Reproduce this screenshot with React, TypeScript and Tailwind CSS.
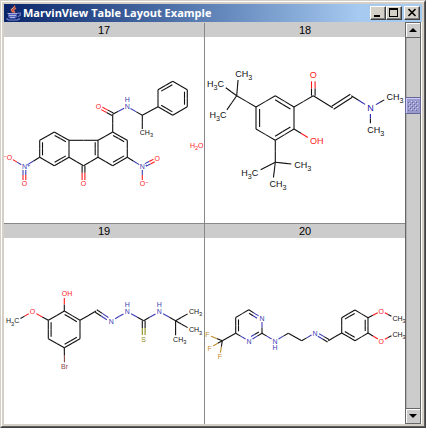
import React from "react";

const INK = "#101010";
const RED = "#ff1a1a";
const BLUE = "#3c3cb4";
const OLIVE = "#8c8c18";
const GOLD = "#c08a28";
const BROWN = "#8c4848";

/* Atom: x, y, label parts ("_" = subscript, "^" = superscript), colour, text anchor */
type Anchor = "start" | "middle" | "end";
type Atom = [number, number, string?, string?, Anchor?];
/* Bond: from, to, kind (1 single, "c" centred double, "l"/"r" double on one side) */
type Bond = [string, string, (1 | "c" | "l" | "r")?];

interface Molecule {
  id: number;
  name: string;
  origin: [number, number];
  size: number;
  gap: number;
  atoms: Record<string, Atom>;
  bonds: Bond[];
}

const molecules: Molecule[] = [
  {
    id: 17,
    name: "Dinitrofluorenone amide hydrate",
    origin: [4, 37],
    size: 7,
    gap: 2.2,
    atoms: {
      a1: [39.7, 140.3], a2: [54.3, 132], a3: [69, 140.3], a4: [69, 157.3], a5: [54.3, 165.7], a6: [39.7, 157.3],
      b1: [98, 140.3], b2: [98, 157.3], b3: [83.5, 165.7], o1: [83.5, 183.5, "O", RED],
      c1: [112.7, 132], c2: [127.3, 140.3], c3: [127.3, 157.3], c4: [112.7, 165.7],
      d1: [112.7, 114.3], o2: [98.6, 106.7, "O", RED], n1: [127.3, 106.7, "N", BLUE], h1: [127.3, 99.7, "H", BLUE],
      d2: [142.3, 115.3], m1: [142.3, 132.7, "CH_3", INK, "start"],
      p1: [158, 106.7], p2: [158, 89.7], p3: [172.7, 81.3], p4: [187.3, 89.7], p5: [187.3, 106.7], p6: [172.7, 115.3],
      n2: [142.3, 166.5, "N^+", BLUE, "start"], o3: [157.3, 158.9, "O", RED], o4: [142.3, 183.7, "O^-", RED, "start"],
      n3: [24.4, 166.5, "N^+", BLUE, "start"], o5: [9.7, 157.8, "^-O", RED, "end"], o6: [24.4, 183.5, "O", RED],
      w: [201, 145.7, "H_2O", RED, "end"],
    },
    bonds: [
      ["a1", "a2"], ["a2", "a3", "r"], ["a3", "a4"], ["a4", "a5", "r"], ["a5", "a6"], ["a6", "a1", "r"],
      ["a3", "b1"], ["b1", "b2", "r"], ["b2", "b3"], ["b3", "a4"], ["b3", "o1", "c"],
      ["b1", "c1"], ["c1", "c2", "r"], ["c2", "c3"], ["c3", "c4", "r"], ["c4", "b2"],
      ["c1", "d1"], ["d1", "o2", "c"], ["d1", "n1"], ["n1", "d2"], ["d2", "m1"], ["d2", "p1"],
      ["p1", "p2"], ["p2", "p3", "r"], ["p3", "p4"], ["p4", "p5", "r"], ["p5", "p6"], ["p6", "p1", "r"],
      ["c3", "n2"], ["n2", "o3", "c"], ["n2", "o4"], ["a6", "n3"], ["n3", "o5"], ["n3", "o6", "c"],
    ],
  },
  {
    id: 18,
    name: "Di-tert-butyl hydroxyphenyl enaminone",
    origin: [205, 37],
    size: 9,
    gap: 4.5,
    atoms: {
      a1: [256, 107], a2: [275.3, 95.7], a3: [294, 107], a4: [294, 129], a5: [275.3, 140.3], a6: [256, 129],
      t1: [236.7, 95.7], m1: [238.6, 73.8, "CH_3", INK, "start"], m2: [220.7, 84, "H_3C", INK, "end"], m3: [223.3, 115, "H_3C", INK, "end"],
      t2: [275.3, 162.3], m4: [297.6, 164.6, "CH_3", INK, "start"], m5: [255, 172.7, "H_3C", INK, "end"], m6: [272.7, 183.7, "CH_3", INK, "start"],
      oh: [313.3, 140.7, "OH", RED, "start"],
      d1: [313.3, 95.7], o1: [313.3, 75, "O", RED], d2: [332.7, 107.7], d3: [351.3, 95.7],
      n1: [370.4, 107.7, "N", "#2020a8"], m7: [389.8, 96.8, "CH_3", INK, "start"], m8: [370.4, 129.5, "CH_3", INK, "start"],
    },
    bonds: [
      ["a1", "a2"], ["a2", "a3", "r"], ["a3", "a4"], ["a4", "a5", "r"], ["a5", "a6"], ["a6", "a1", "r"],
      ["a1", "t1"], ["t1", "m1"], ["t1", "m2"], ["t1", "m3"],
      ["a5", "t2"], ["t2", "m4"], ["t2", "m5"], ["t2", "m6"],
      ["a4", "oh"], ["a3", "d1"], ["d1", "o1", "c"], ["d1", "d2"], ["d2", "d3", "c"], ["d3", "n1"], ["n1", "m7"], ["n1", "m8"],
    ],
  },
  {
    id: 19,
    name: "Bromo methoxy salicylaldehyde thiosemicarbazone",
    origin: [4, 238],
    size: 7,
    gap: 3,
    atoms: {
      a1: [48.3, 320.3], a2: [64.3, 311], a3: [80, 320.3], a4: [80, 338.7], a5: [64.3, 347.7], a6: [48.3, 338.7],
      oh: [64.3, 293.7, "OH", RED, "start"], o1: [32.5, 311.5, "O", RED], m1: [16.7, 320.8, "H_3C", INK, "end"],
      br: [64.5, 366.7, "Br", BROWN], d1: [96, 311], n1: [111.3, 321, "N", BLUE],
      n2: [127.3, 311.7, "N", BLUE], h2: [127.3, 304.4, "H", BLUE], d2: [143.7, 320.7], s: [143.7, 339.5, "S", OLIVE],
      n3: [159.3, 311.7, "N", BLUE], h3: [159.3, 304.4, "H", BLUE], t: [175.6, 320.7],
      m2: [191.5, 311.7, "CH_3", INK, "start"], m3: [191.5, 329.8, "CH_3", INK, "start"], m4: [175.6, 339.7, "CH_3", INK, "start"],
    },
    bonds: [
      ["a1", "a2"], ["a2", "a3", "r"], ["a3", "a4"], ["a4", "a5", "r"], ["a5", "a6"], ["a6", "a1", "r"],
      ["a2", "oh"], ["a1", "o1"], ["o1", "m1"], ["a5", "br"], ["a3", "d1"], ["d1", "n1", "c"], ["n1", "n2"],
      ["n2", "d2"], ["d2", "s", "c"], ["d2", "n3"], ["n3", "t"], ["t", "m2"], ["t", "m3"], ["t", "m4"],
    ],
  },
  {
    id: 20,
    name: "Trifluoromethyl pyrimidine dimethoxybenzylidene diamine",
    origin: [205, 238],
    size: 7,
    gap: 2.6,
    atoms: {
      a1: [235.7, 333.3], a2: [235.7, 317.5], a3: [248.8, 309.8], a4: [262, 318, "N", BLUE], a5: [262, 333.3], a6: [249, 341, "N", BLUE],
      t: [222.3, 340.7], f1: [207.3, 334.8, "F", GOLD], f2: [209.7, 348, "F", GOLD], f3: [219.8, 356.7, "F", GOLD],
      n1: [275, 341, "N", BLUE], h1: [275, 347.6, "H", BLUE], d1: [288.3, 333.3], d2: [301.7, 340.7], n2: [315, 333, "N", BLUE], d3: [328.3, 340.7],
      b1: [341.7, 333], b2: [341.7, 317.7], b3: [355, 310], b4: [368, 317.7], b5: [368, 333], b6: [355, 340.7],
      o1: [381.3, 311, "O", RED], m1: [395, 318.2, "CH_3", INK, "start"], o2: [381.3, 341, "O", RED], m2: [395, 334, "CH_3", INK, "start"],
    },
    bonds: [
      ["a1", "a2", "r"], ["a2", "a3"], ["a3", "a4", "r"], ["a4", "a5"], ["a5", "a6", "r"], ["a6", "a1"],
      ["a1", "t"], ["t", "f1"], ["t", "f2"], ["t", "f3"], ["a5", "n1"], ["n1", "d1"], ["d1", "d2"], ["d2", "n2"], ["n2", "d3", "c"], ["d3", "b1"],
      ["b1", "b2"], ["b2", "b3", "r"], ["b3", "b4"], ["b4", "b5", "r"], ["b5", "b6"], ["b6", "b1", "r"],
      ["b4", "o1"], ["o1", "m1"], ["b5", "o2"], ["o2", "m2"],
    ],
  },
];

function BondLines({ a, b, kind, gap, size }: { a: Atom; b: Atom; kind: 1 | "c" | "l" | "r"; gap: number; size: number }) {
  const dx = b[0] - a[0];
  const dy = b[1] - a[1];
  const len = Math.hypot(dx, dy);
  const ux = dx / len;
  const uy = dy / len;
  const trim = (atom: Atom) => (atom[2] ? gap + size * 0.2 : 0);
  const space = size > 8 ? 3.6 : 2.8;
  const line = (shift: number, inset: number) => {
    const s = Math.max(trim(a), inset);
    const e = len - Math.max(trim(b), inset);
    const m = (s + e) / 2;
    const at = (t: number): [number, number] => [a[0] + ux * t - uy * shift, a[1] + uy * t + ux * shift];
    const [p, q, r] = [at(s), at(m), at(e)];
    return (
      <g key={shift}>
        <line x1={p[0]} y1={p[1]} x2={q[0]} y2={q[1]} stroke={a[3] ?? INK} />
        <line x1={q[0]} y1={q[1]} x2={r[0]} y2={r[1]} stroke={b[3] ?? INK} />
      </g>
    );
  };
  if (kind === 1) return line(0, 0);
  if (kind === "c") return <>{[line(-space / 2, 0), line(space / 2, 0)]}</>;
  return <>{[line(0, 0), line(kind === "r" ? space : -space, 2)]}</>;
}

function AtomLabel({ atom, size }: { atom: Atom; size: number }) {
  const [x, y, label, color, anchor = "middle"] = atom;
  if (!label) return null;
  const half = size * 0.36;
  const tx = anchor === "start" ? x - half : anchor === "end" ? x + half : x;
  const parts = label.match(/[_^].|[^_^]+?(?=[_^]|$)/g) ?? [];
  let level = 0;
  return (
    <text x={tx} y={y + size * 0.36} fill={color} fontSize={size} textAnchor={anchor}>
      {parts.map((part, i) => {
        const next = part[0] === "_" ? size * 0.32 : part[0] === "^" ? -size * 0.35 : 0;
        const dy = next - level;
        level = next;
        return (
          <tspan key={i} dy={dy} fontSize={next ? size * 0.8 : size}>
            {part.replace(/[_^]/, "").replace("-", "−")}
          </tspan>
        );
      })}
    </text>
  );
}

function MoleculeCell({ molecule }: { molecule: Molecule }) {
  const { id, name, origin, size, gap, atoms, bonds } = molecule;
  return (
    <section className="flex min-w-0 flex-col bg-white">
      <h2 className="h-[14px] bg-[#cccccc] text-center text-[11px] leading-[15px] text-black">{id}</h2>
      <svg viewBox={`${origin[0]} ${origin[1]} 200 186`} role="img" aria-label={name} className="block w-full" strokeWidth={1.1}>
        {bonds.map(([from, to, kind = 1]) => (
          <BondLines key={from + to} a={atoms[from]} b={atoms[to]} kind={kind} gap={gap} size={size} />
        ))}
        {Object.entries(atoms).map(([key, atom]) => (
          <AtomLabel key={key} atom={atom} size={size} />
        ))}
      </svg>
    </section>
  );
}

function JavaIcon() {
  return (
    <svg viewBox="0 0 16 16" className="h-4 w-4 shrink-0" fill="none" aria-hidden="true">
      <path d="M8.5 0.5v1.5L5.5 4.5v1l2 2M10 3L7.5 5v1L9 7.5" stroke="#f07048" strokeWidth="1.4" />
      <path d="M7.5 2.5l-2 2" stroke="#f8c8b0" strokeWidth="0.8" />
      <path d="M2 8.5h9v3.2l-1.5 1.8h-6L2 11.7z" fill="#5060b8" />
      <path d="M1.5 8.5h10M3 10.5h7M4 12.5h5" stroke="#c8ccf0" strokeWidth="0.8" />
      <path d="M11.5 8.2h2.8v2l-2.5 1.5" stroke="#7078c8" strokeWidth="1.2" />
      <path d="M0.5 13.6l2 1.4h8.5l3-1.4" stroke="#7c88d8" strokeWidth="1.2" />
    </svg>
  );
}

const captionButton =
  "flex h-[14px] w-4 items-center justify-center border border-t-white border-l-white border-r-[#404040] border-b-[#404040] bg-[#d4d0c8] shadow-[inset_-1px_-1px_0_#808080]";
const arrowButton =
  "flex h-4 w-full shrink-0 items-center justify-center border border-[#666666] bg-[#cccccc] shadow-[inset_1px_1px_0_#ffffff]";

function TitleBar() {
  return (
    <header className="flex h-[18px] items-center bg-linear-to-r from-[#0a246a] to-[#a6caf0] to-85% pr-[2px] pl-[2px]">
      <JavaIcon />
      <h1 className="ml-px min-w-0 flex-1 truncate font-['Open_Sans','Noto_Sans',sans-serif] text-[11px] leading-[18px] font-bold text-white">
        MarvinView Table Layout Example
      </h1>
      <button type="button" aria-label="Minimize" className={captionButton}>
        <svg viewBox="0 0 14 12" className="h-3 w-[14px]"><path d="M3 8h6v2H3z" /></svg>
      </button>
      <button type="button" aria-label="Maximize" className={captionButton}>
        <svg viewBox="0 0 14 12" className="h-3 w-[14px]"><path fillRule="evenodd" d="M2 1h9v9H2zM3 3v6h7V3z" /></svg>
      </button>
      <button type="button" aria-label="Close" className={`${captionButton} ml-[2px]`}>
        <svg viewBox="0 0 14 12" className="h-3 w-[14px]" stroke="#000" strokeWidth="1.6"><path d="M3.5 2l7 7M10.5 2l-7 7" /></svg>
      </button>
    </header>
  );
}

function ScrollBar() {
  return (
    <div className="mr-px flex w-4 shrink-0 flex-col">
      <button type="button" aria-label="Scroll up" className={arrowButton}>
        <svg viewBox="0 0 8 4" className="h-1 w-2"><path d="M0 4h8L4 0z" /></svg>
      </button>
      <div
        role="scrollbar"
        aria-label="Molecules"
        aria-controls="molecule-table"
        aria-orientation="vertical"
        aria-valuenow={16}
        className="flex flex-1 flex-col border-x border-[#666666] bg-[#cccccc] shadow-[inset_1px_0_0_#b0b0b0]"
      >
        <div className="grow-[16]" />
        <div className="-mx-px h-[17px] border border-[#666699] bg-[#9999cc] p-[2px] shadow-[inset_1px_1px_0_#ccccff]">
          <svg viewBox="0 0 10 11" className="block h-[11px] w-[10px]" aria-hidden="true">
            {[0, 1, 2, 3, 4].map((row) =>
              [0, 1, 2].map((col) => {
                const x = col * 4 + (row % 2) * 2 - 1;
                const y = row * 2 + 1;
                return (
                  <g key={`${row}-${col}`}>
                    <rect x={x} y={y} width="1" height="1" fill="#ccccff" />
                    <rect x={x + 1} y={y + 1} width="1" height="1" fill="#666699" />
                  </g>
                );
              }),
            )}
          </svg>
        </div>
        <div className="grow-[80]" />
      </div>
      <button type="button" aria-label="Scroll down" className={arrowButton}>
        <svg viewBox="0 0 8 4" className="h-1 w-2"><path d="M0 0h8L4 4z" /></svg>
      </button>
    </div>
  );
}

export default function App() {
  return (
    <div className="border border-t-[#d4d0c8] border-r-[#404040] border-b-[#404040] border-l-[#d4d0c8] font-['Liberation_Sans',Arial,sans-serif]">
      <div className="border border-t-white border-r-[#606060] border-b-[#606060] border-l-white">
        <div className="border-2 border-[#d4d0c8] bg-white">
          <TitleBar />
          <div className="flex">
            <main id="molecule-table" className="grid min-w-0 flex-1 grid-cols-2 gap-px border-t border-[#cccccc] bg-[#888888]">
              {molecules.map((molecule) => (
                <MoleculeCell key={molecule.id} molecule={molecule} />
              ))}
            </main>
            <ScrollBar />
          </div>
        </div>
      </div>
    </div>
  );
}
